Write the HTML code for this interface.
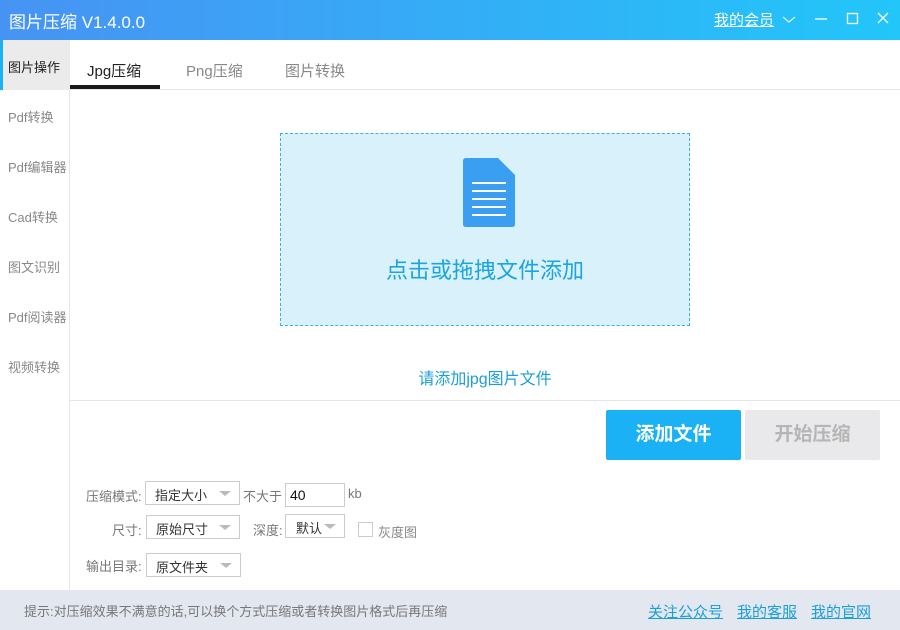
<!DOCTYPE html>
<html><head><meta charset="utf-8"><style>
*{margin:0;padding:0;box-sizing:border-box}
body{width:900px;height:630px;position:relative;overflow:hidden;background:#fff;font-family:"Liberation Sans","Noto Sans CJK SC",sans-serif;}
.a{position:absolute}
.title{left:0;top:0;width:900px;height:40px;background:linear-gradient(90deg,#4793f3,#22c6f9)}
.side{left:0;top:40px;width:70px;height:550px;border-right:1px solid #e6e6e6;background:#fff}
.si{position:absolute;left:8px;font-size:13px;color:#888}
.dd{position:absolute;height:24px;border:1px solid #ccc;font-size:13px;color:#333;padding:3px 0 0 9px;background:#fff}
.dd:after{content:"";position:absolute;right:8px;top:9px;border-left:6px solid transparent;border-right:6px solid transparent;border-top:5px solid #bbb}
.lb{position:absolute;font-size:13px;color:#777}
</style></head><body>
<div class="a title"></div>
<div class="a" style="left:9px;top:8px;font-size:17px;color:#fff">图片压缩 V1.4.0.0</div>
<div class="a" style="left:714px;top:9px;font-size:15px;color:#fff;text-decoration:underline">我的会员</div>
<svg class="a" style="left:780px;top:10px" width="120" height="20"><polyline points="3,7 9,12 15,7" fill="none" stroke="#d0eefa" stroke-width="1.3"/><line x1="35" y1="9" x2="47" y2="9" stroke="#fff" stroke-width="1.3"/><rect x="67.5" y="3.5" width="10" height="10" fill="none" stroke="#fff" stroke-width="1.3"/><path d="M98 3 L108 13 M108 3 L98 13" stroke="#fff" stroke-width="1.3"/></svg>
<div class="a side"></div>
<div class="a" style="left:0;top:40px;width:70px;height:50px;background:#ebebeb;border-left:3px solid #1ab2f5"></div>
<div class="si" style="top:57px;color:#222">图片操作</div>
<div class="si" style="top:107px">Pdf转换</div>
<div class="si" style="top:157px">Pdf编辑器</div>
<div class="si" style="top:207px">Cad转换</div>
<div class="si" style="top:257px">图文识别</div>
<div class="si" style="top:307px">Pdf阅读器</div>
<div class="si" style="top:357px">视频转换</div>
<div class="a" style="left:70px;top:89px;width:830px;height:1px;background:#e8e8e8"></div>
<div class="a" style="left:70px;top:85px;width:90px;height:4px;background:#1a1a1a"></div>
<div class="a" style="left:87px;top:60px;font-size:15px;color:#222">Jpg压缩</div>
<div class="a" style="left:186px;top:60px;font-size:15px;color:#888">Png压缩</div>
<div class="a" style="left:285px;top:60px;font-size:15px;color:#888">图片转换</div>
<div class="a" style="left:280px;top:133px;width:410px;height:193px;background:#d9f1fa;border:1px dashed #3cb0e0"></div>
<svg class="a" style="left:462px;top:157px" width="54" height="72"><path d="M4 1 H36 L53 18 V67 Q53 70 50 70 H4 Q1 70 1 67 V4 Q1 1 4 1Z" fill="#3a9ff0"/><g stroke="#fff" stroke-width="2"><line x1="10" y1="26" x2="44" y2="26"/><line x1="10" y1="34" x2="44" y2="34"/><line x1="10" y1="42" x2="44" y2="42"/><line x1="10" y1="50" x2="44" y2="50"/><line x1="10" y1="58" x2="44" y2="58"/></g></svg>
<div class="a" style="left:280px;top:253px;width:410px;text-align:center;font-size:22px;color:#1aa5e0">点击或拖拽文件添加</div>
<div class="a" style="left:280px;top:365px;width:410px;text-align:center;font-size:16px;color:#1a9fd8">请添加jpg图片文件</div>
<div class="a" style="left:70px;top:400px;width:830px;height:1px;background:#e6e6e6"></div>
<div class="a" style="left:606px;top:410px;width:135px;height:50px;background:#1ab2f5;border-radius:2px;color:#fff;font-size:19px;font-weight:bold;text-align:center;line-height:50px">添加文件</div>
<div class="a" style="left:745px;top:410px;width:135px;height:50px;background:#e9e9eb;border-radius:2px;color:#b5b5b5;font-size:19px;font-weight:bold;text-align:center;line-height:50px">开始压缩</div>
<div class="lb" style="left:86px;top:486px">压缩模式:</div>
<div class="dd" style="left:145px;top:481px;width:95px">指定大小</div>
<div class="lb" style="left:243px;top:486px">不大于</div>
<div class="a" style="left:285px;top:483px;width:60px;height:24px;border:1px solid #ccc;font-size:14px;padding:3px 0 0 4px;color:#111">40</div>
<div class="lb" style="left:348px;top:486px">kb</div>
<div class="lb" style="left:112px;top:520px">尺寸:</div>
<div class="dd" style="left:146px;top:515px;width:94px">原始尺寸</div>
<div class="lb" style="left:253px;top:520px">深度:</div>
<div class="dd" style="left:285px;top:514px;width:60px;padding-left:10px">默认</div>
<div class="a" style="left:358px;top:522px;width:15px;height:15px;border:1px solid #ccc"></div>
<div class="lb" style="left:378px;top:522px;color:#888">灰度图</div>
<div class="lb" style="left:86px;top:556px">输出目录:</div>
<div class="dd" style="left:146px;top:553px;width:95px">原文件夹</div>
<div class="a" style="left:0;top:590px;width:900px;height:40px;background:#e3e7ef"></div>
<div class="a" style="left:24px;top:601px;font-size:13px;color:#777">提示:对压缩效果不满意的话,可以换个方式压缩或者转换图片格式后再压缩</div>
<div class="a" style="left:648px;top:601px;font-size:15px;color:#1a9fd8;text-decoration:underline">关注公众号</div>
<div class="a" style="left:737px;top:601px;font-size:15px;color:#1a9fd8;text-decoration:underline">我的客服</div>
<div class="a" style="left:811px;top:601px;font-size:15px;color:#1a9fd8;text-decoration:underline">我的官网</div>
</body></html>
